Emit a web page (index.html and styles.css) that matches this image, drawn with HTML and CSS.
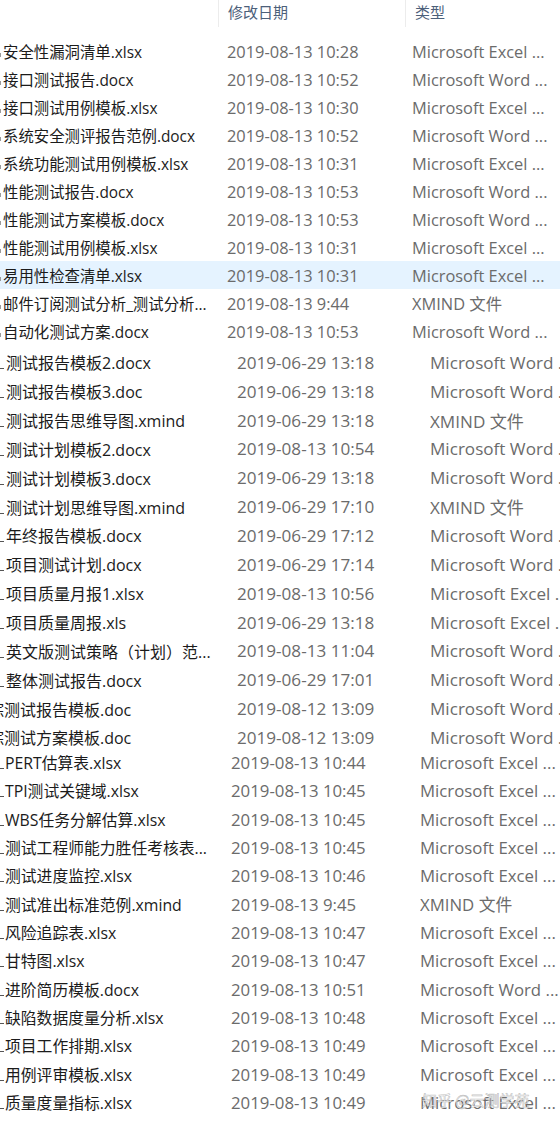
FILE: index.html
```html
<!DOCTYPE html>
<html lang="zh">
<head>
<meta charset="utf-8">
<title>文件列表</title>
<link rel="stylesheet" href="styles.css">
</head>
<body>
<div class="page">
  <div class="header">
    <div class="hcell hname"></div>
    <div class="hcell hdate">修改日期</div>
    <div class="hcell htype">类型</div>
  </div>

  <div class="section s1">
    <div class="row"><div class="name"><span class="tick"></span>安全性漏洞清单.xlsx</div><div class="date">2019-08-13 10:28</div><div class="type">Microsoft Excel ...</div></div>
    <div class="row"><div class="name"><span class="tick"></span>接口测试报告.docx</div><div class="date">2019-08-13 10:52</div><div class="type">Microsoft Word ...</div></div>
    <div class="row"><div class="name"><span class="tick"></span>接口测试用例模板.xlsx</div><div class="date">2019-08-13 10:30</div><div class="type">Microsoft Excel ...</div></div>
    <div class="row"><div class="name"><span class="tick"></span>系统安全测评报告范例.docx</div><div class="date">2019-08-13 10:52</div><div class="type">Microsoft Word ...</div></div>
    <div class="row"><div class="name"><span class="tick"></span>系统功能测试用例模板.xlsx</div><div class="date">2019-08-13 10:31</div><div class="type">Microsoft Excel ...</div></div>
    <div class="row"><div class="name"><span class="tick"></span>性能测试报告.docx</div><div class="date">2019-08-13 10:53</div><div class="type">Microsoft Word ...</div></div>
    <div class="row"><div class="name"><span class="tick"></span>性能测试方案模板.docx</div><div class="date">2019-08-13 10:53</div><div class="type">Microsoft Word ...</div></div>
    <div class="row"><div class="name"><span class="tick"></span>性能测试用例模板.xlsx</div><div class="date">2019-08-13 10:31</div><div class="type">Microsoft Excel ...</div></div>
    <div class="row selected"><div class="name"><span class="tick"></span>易用性检查清单.xlsx</div><div class="date">2019-08-13 10:31</div><div class="type">Microsoft Excel ...</div></div>
    <div class="row"><div class="name"><span class="tick"></span>邮件订阅测试分析_测试分析...</div><div class="date">2019-08-13 9:44</div><div class="type">XMIND 文件</div></div>
    <div class="row"><div class="name"><span class="tick"></span>自动化测试方案.docx</div><div class="date">2019-08-13 10:53</div><div class="type">Microsoft Word ...</div></div>
  </div>

  <div class="section s2">
    <div class="row"><div class="name"><span class="tick"></span>测试报告模板2.docx</div><div class="date">2019-06-29 13:18</div><div class="type">Microsoft Word ...</div></div>
    <div class="row"><div class="name"><span class="tick"></span>测试报告模板3.doc</div><div class="date">2019-06-29 13:18</div><div class="type">Microsoft Word ...</div></div>
    <div class="row"><div class="name"><span class="tick"></span>测试报告思维导图.xmind</div><div class="date">2019-06-29 13:18</div><div class="type">XMIND 文件</div></div>
    <div class="row"><div class="name"><span class="tick"></span>测试计划模板2.docx</div><div class="date">2019-08-13 10:54</div><div class="type">Microsoft Word ...</div></div>
    <div class="row"><div class="name"><span class="tick"></span>测试计划模板3.docx</div><div class="date">2019-06-29 13:18</div><div class="type">Microsoft Word ...</div></div>
    <div class="row"><div class="name"><span class="tick"></span>测试计划思维导图.xmind</div><div class="date">2019-06-29 17:10</div><div class="type">XMIND 文件</div></div>
    <div class="row"><div class="name"><span class="tick"></span>年终报告模板.docx</div><div class="date">2019-06-29 17:12</div><div class="type">Microsoft Word ...</div></div>
    <div class="row"><div class="name"><span class="tick"></span>项目测试计划.docx</div><div class="date">2019-06-29 17:14</div><div class="type">Microsoft Word ...</div></div>
    <div class="row"><div class="name"><span class="tick"></span>项目质量月报1.xlsx</div><div class="date">2019-08-13 10:56</div><div class="type">Microsoft Excel ...</div></div>
    <div class="row"><div class="name"><span class="tick"></span>项目质量周报.xls</div><div class="date">2019-06-29 13:18</div><div class="type">Microsoft Excel ...</div></div>
    <div class="row"><div class="name"><span class="tick"></span>英文版测试策略（计划）范...</div><div class="date">2019-08-13 11:04</div><div class="type">Microsoft Word ...</div></div>
    <div class="row"><div class="name"><span class="tick"></span>整体测试报告.docx</div><div class="date">2019-06-29 17:01</div><div class="type">Microsoft Word ...</div></div>
    <div class="row"><div class="name"><span class="cut">综测试报告模板.doc</span></div><div class="date">2019-08-12 13:09</div><div class="type">Microsoft Word ...</div></div>
    <div class="row"><div class="name"><span class="cut">综测试方案模板.doc</span></div><div class="date">2019-08-12 13:09</div><div class="type">Microsoft Word ...</div></div>
  </div>

  <div class="section s3">
    <div class="row"><div class="name"><span class="tick"></span>PERT估算表.xlsx</div><div class="date">2019-08-13 10:44</div><div class="type">Microsoft Excel ...</div></div>
    <div class="row"><div class="name"><span class="tick"></span>TPI测试关键域.xlsx</div><div class="date">2019-08-13 10:45</div><div class="type">Microsoft Excel ...</div></div>
    <div class="row"><div class="name"><span class="tick"></span>WBS任务分解估算.xlsx</div><div class="date">2019-08-13 10:45</div><div class="type">Microsoft Excel ...</div></div>
    <div class="row"><div class="name"><span class="tick"></span>测试工程师能力胜任考核表...</div><div class="date">2019-08-13 10:45</div><div class="type">Microsoft Excel ...</div></div>
    <div class="row"><div class="name"><span class="tick"></span>测试进度监控.xlsx</div><div class="date">2019-08-13 10:46</div><div class="type">Microsoft Excel ...</div></div>
    <div class="row"><div class="name"><span class="tick"></span>测试准出标准范例.xmind</div><div class="date">2019-08-13 9:45</div><div class="type">XMIND 文件</div></div>
    <div class="row"><div class="name"><span class="tick"></span>风险追踪表.xlsx</div><div class="date">2019-08-13 10:47</div><div class="type">Microsoft Excel ...</div></div>
    <div class="row"><div class="name"><span class="tick"></span>甘特图.xlsx</div><div class="date">2019-08-13 10:47</div><div class="type">Microsoft Excel ...</div></div>
    <div class="row"><div class="name"><span class="tick"></span>进阶简历模板.docx</div><div class="date">2019-08-13 10:51</div><div class="type">Microsoft Word ...</div></div>
    <div class="row"><div class="name"><span class="tick"></span>缺陷数据度量分析.xlsx</div><div class="date">2019-08-13 10:48</div><div class="type">Microsoft Excel ...</div></div>
    <div class="row"><div class="name"><span class="tick"></span>项目工作排期.xlsx</div><div class="date">2019-08-13 10:49</div><div class="type">Microsoft Excel ...</div></div>
    <div class="row"><div class="name"><span class="tick"></span>用例评审模板.xlsx</div><div class="date">2019-08-13 10:49</div><div class="type">Microsoft Excel ...</div></div>
    <div class="row last"><div class="name"><span class="tick"></span>质量度量指标.xlsx</div><div class="date">2019-08-13 10:49</div><div class="type">Microsoft Excel ...<span class="watermark">知乎 @云测学苑</span></div></div>
  </div>
</div>
</body>
</html>
```

FILE: styles.css
```css
html, body {
  margin: 0;
  padding: 0;
  background: #ffffff;
}

.page {
  width: 560px;
  height: 1123px;
  overflow: hidden;
  font-family: "Open Sans", "Noto Sans CJK SC", sans-serif;
  color: #1b1b1b;
}

.header {
  display: grid;
  grid-template-columns: 218px 187px 1fr;
  height: 37px;
}

.hcell {
  height: 27px;
  line-height: 24px;
  font-size: 15px;
  color: #4c607a;
  font-family: "Noto Sans CJK SC", sans-serif;
  padding-left: 9px;
  border-left: 1px solid #ececec;
}

.hname {
  border-left: none;
}

.section {
  display: flex;
  flex-direction: column;
}

.row {
  display: grid;
  align-items: center;
  white-space: nowrap;
}

.row > div {
  overflow: hidden;
}

.name {
  display: flex;
  align-items: center;
}

.tick {
  display: inline-block;
  flex: none;
  align-self: flex-end;
  height: 1px;
  background: #555;
}

.date, .type {
  color: #6b6b6b;
}

.selected {
  background: #e5f3ff;
}

/* Section 1 */
.s1 .row {
  grid-template-columns: 227px 185px 1fr;
  height: 28px;
}
.s1 .name { font-size: 15.4px; }
.s1 .tick { width: 1px; height: 4px; background: #9a9a9a; margin-right: 2px; margin-bottom: 6px; }
.s1 .date, .s1 .type { font-size: 16.4px; }

/* Section 2 */
.s2 {
  margin-top: 3px;
}
.s2 .row {
  grid-template-columns: 237px 193px 1fr;
  height: 28.85px;
}
.s2 .name { font-size: 16px; }
.s2 .tick { width: 4px; margin-right: 2px; margin-bottom: 5px; }
.s2 .date, .s2 .type { font-size: 17.1px; }
.s2 .cut { margin-left: -12px; }

/* Section 3 */
.s3 {
  margin-top: -3.4px;
}
.s3 .row {
  grid-template-columns: 231px 189px 1fr;
  height: 28.33px;
}
.s3 .name { font-size: 15.8px; }
.s3 .tick { width: 4px; margin-right: 1px; margin-bottom: 5px; }
.s3 .date, .s3 .type { font-size: 16.8px; }

.last .type {
  position: relative;
  overflow: visible;
}

.watermark {
  position: absolute;
  left: 2px;
  top: -2px;
  font-family: "Noto Sans CJK SC", sans-serif;
  font-size: 15px;
  color: rgba(255, 255, 255, 0.85);
  -webkit-text-stroke: 0.6px rgba(150, 150, 150, 0.6);
}
```
